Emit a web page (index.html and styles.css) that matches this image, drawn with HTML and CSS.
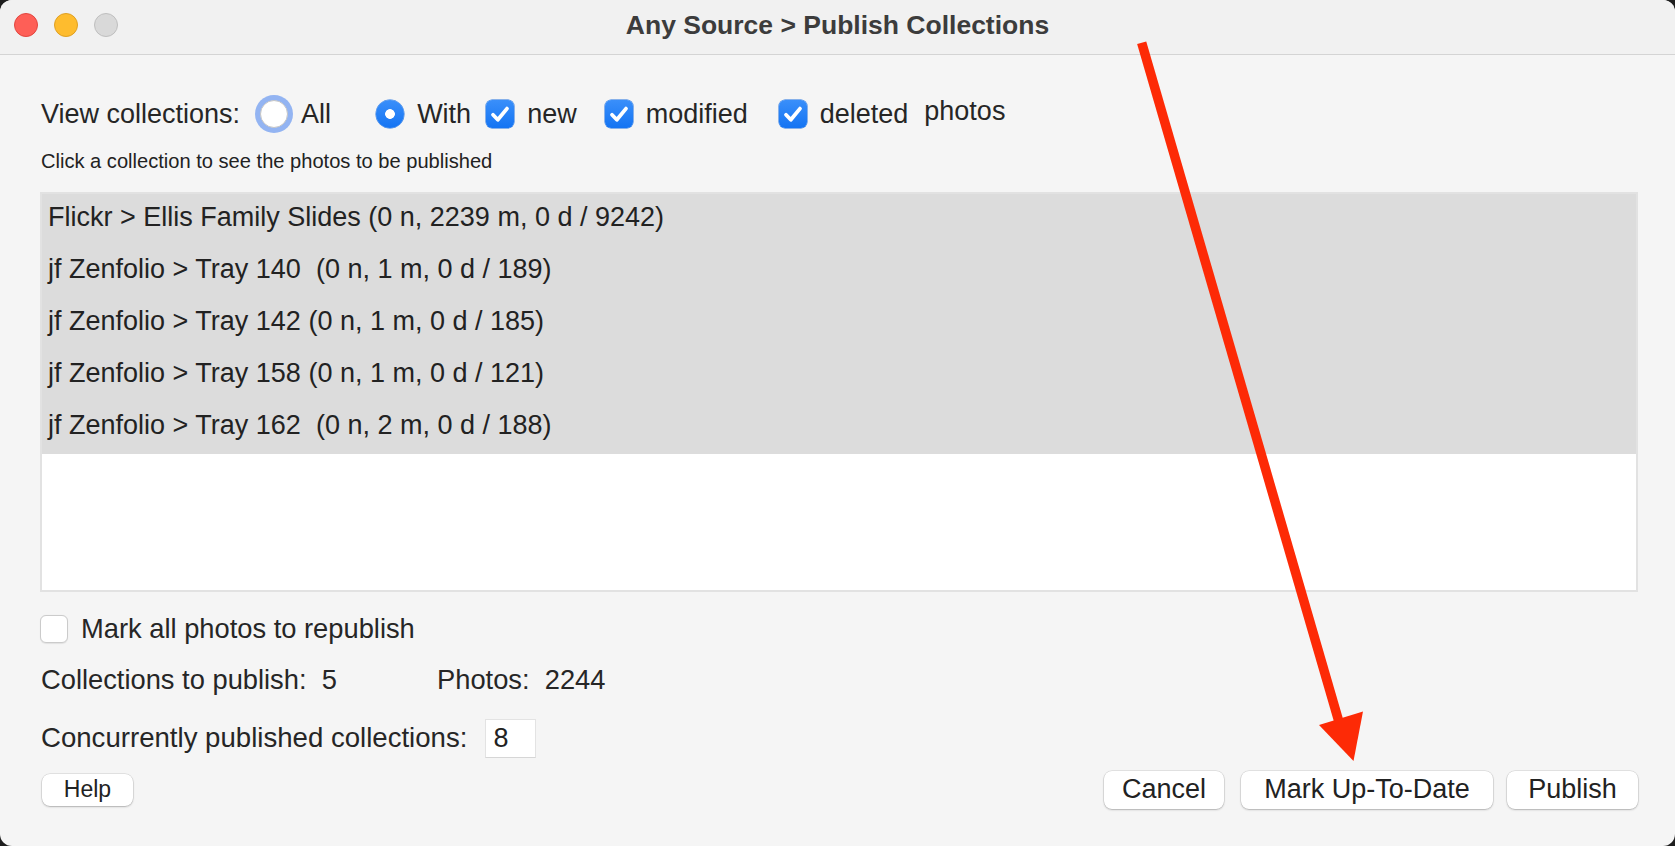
FILE: index.html
```html
<!DOCTYPE html>
<html>
<head>
<meta charset="utf-8">
<title>Any Source &gt; Publish Collections</title>
<link rel="stylesheet" href="styles.css">
</head>
<body>
<div class="window">
  <div class="titlebar">
    <div class="lights">
      <span class="light red"></span>
      <span class="light yellow"></span>
      <span class="light grey"></span>
    </div>
    <div class="title">Any Source &gt; Publish Collections</div>
  </div>
  <div class="content">
    <div class="view-row">
      <span class="view-label">View collections:</span>
      <span class="radio radio-off"></span><span class="opt opt-all">All</span>
      <span class="radio radio-on"></span><span class="opt opt-with">With</span>
      <span class="check check-on"><svg viewBox="0 0 28 28" width="28" height="28"><path d="M7 14.8 L11.8 19.8 L21 8.6" fill="none" stroke="#fff" stroke-width="3.8" stroke-linecap="round" stroke-linejoin="round"/></svg></span><span class="opt opt-new">new</span>
      <span class="check check-on"><svg viewBox="0 0 28 28" width="28" height="28"><path d="M7 14.8 L11.8 19.8 L21 8.6" fill="none" stroke="#fff" stroke-width="3.8" stroke-linecap="round" stroke-linejoin="round"/></svg></span><span class="opt opt-mod">modified</span>
      <span class="check check-on"><svg viewBox="0 0 28 28" width="28" height="28"><path d="M7 14.8 L11.8 19.8 L21 8.6" fill="none" stroke="#fff" stroke-width="3.8" stroke-linecap="round" stroke-linejoin="round"/></svg></span><span class="opt opt-del">deleted</span>
      <span class="photos">photos</span>
    </div>
    <div class="hint">Click a collection to see the photos to be published</div>
    <div class="list">
      <div class="row">Flickr &gt; Ellis Family Slides (0 n, 2239 m, 0 d / 9242)</div>
      <div class="row">jf Zenfolio &gt; Tray 140  (0 n, 1 m, 0 d / 189)</div>
      <div class="row">jf Zenfolio &gt; Tray 142 (0 n, 1 m, 0 d / 185)</div>
      <div class="row">jf Zenfolio &gt; Tray 158 (0 n, 1 m, 0 d / 121)</div>
      <div class="row">jf Zenfolio &gt; Tray 162  (0 n, 2 m, 0 d / 188)</div>
    </div>
    <div class="mark-row">
      <span class="check check-off"></span>
      <span class="mark-label">Mark all photos to republish</span>
    </div>
    <div class="stats">
      <span class="stat-coll">Collections to publish:  5</span>
      <span class="stat-photos">Photos:  2244</span>
    </div>
    <div class="conc-row">
      <span class="conc-label">Concurrently published collections:</span>
      <span class="num-field">8</span>
    </div>
    <div class="buttons">
      <button class="btn btn-help">Help</button>
      <div class="spacer"></div>
      <button class="btn btn-main btn-cancel">Cancel</button>
      <button class="btn btn-main btn-mark">Mark Up-To-Date</button>
      <button class="btn btn-main btn-publish">Publish</button>
    </div>
  </div>
  <svg class="arrow" viewBox="0 0 1675 846" width="1675" height="846">
    <line x1="1141.7" y1="42.7" x2="1339" y2="722" stroke="#fd2a06" stroke-width="9.5" stroke-linecap="butt"/>
    <polygon points="1319,725 1363,711.5 1353.5,761" fill="#fd2a06"/>
  </svg>
</div>
</body>
</html>
```

FILE: styles.css
```css
* { box-sizing: border-box; }

html, body {
  margin: 0;
  padding: 0;
}

body {
  width: 1675px;
  height: 846px;
  background: #1e1e1e;
  font-family: "Liberation Sans", Arial, sans-serif;
  color: #262626;
  overflow: hidden;
}

.window {
  position: relative;
  width: 1675px;
  height: 846px;
  background: #f5f5f5;
  border-radius: 12px;
  overflow: hidden;
  display: flex;
  flex-direction: column;
}

.arrow {
  position: absolute;
  left: 0;
  top: 0;
  pointer-events: none;
}

.titlebar {
  position: relative;
  height: 55px;
  flex: none;
  background: #f1f1f1;
  border-bottom: 1px solid #d4d4d4;
  display: flex;
  align-items: center;
  justify-content: center;
}

.lights {
  position: absolute;
  left: 14px;
  top: 13px;
  display: flex;
  gap: 16px;
}

.light {
  width: 24px;
  height: 24px;
  border-radius: 50%;
  display: block;
}
.light.red { background: #fe5f57; border: 1px solid #e2463f; }
.light.yellow { background: #febc2e; border: 1px solid #dfa023; }
.light.grey { background: #d9d9d9; border: 1px solid #bfbfbf; }

.title {
  font-weight: bold;
  font-size: 26.5px;
  color: #3c3c3c;
  margin-top: -3px;
}

.content {
  flex: 1;
  padding: 40px 37px 0 40px;
  display: flex;
  flex-direction: column;
}

/* first row */
.view-row {
  height: 38px;
  display: flex;
  align-items: center;
  font-size: 27px;
}

.view-label { margin-left: 1px; }

.radio {
  width: 28px;
  height: 28px;
  border-radius: 50%;
  flex: none;
}
.radio-off {
  margin-left: 20px;
  background: #fff;
  border: 1px solid #c6c6c6;
  box-shadow: 0 0 0 5px #93b4f2;
}
.radio-on {
  background: radial-gradient(circle, #fff 0 4.5px, transparent 5.2px), linear-gradient(#3a8ffa, #1474f3);
  box-shadow: 0 0 0 0.5px #1a6fe0;
}

.opt { margin-left: 13px; }
.opt-all { margin-right: 45px; }
.opt-with { margin-right: 15px; }
.opt-new { margin-right: 28px; }
.opt-mod { margin-right: 31px; }

.check {
  width: 28px;
  height: 28px;
  border-radius: 6px;
  flex: none;
  display: block;
}
.check svg { display: block; }
.check-on {
  background: linear-gradient(#3a8ffa, #1474f3);
  box-shadow: 0 0 0 0.5px #1a6fe0;
}
.check-off {
  background: #fff;
  border: 1px solid #cbcbcb;
  box-shadow: 0 0.5px 1px rgba(0,0,0,0.08);
}

.photos {
  margin-left: 16px;
  margin-bottom: 5px;
}

/* hint */
.hint {
  margin-top: 16px;
  font-size: 20.1px;
  line-height: 24px;
  color: #222;
  margin-left: 1px;
}

/* list */
.list {
  margin-top: 19px;
  height: 400px;
  background: #fff;
  border: 2px solid #e2e2e2;
  flex: none;
}

.row {
  height: 52px;
  background: #dcdcdc;
  font-size: 27px;
  line-height: 47px;
  padding-left: 6px;
  white-space: pre;
  color: #222;
}

/* mark all */
.mark-row {
  margin-top: 23px;
  height: 28px;
  display: flex;
  align-items: center;
  font-size: 27px;
}
.mark-label { margin-left: 13px; font-size: 27.3px; }

/* stats */
.stats {
  margin-top: 21px;
  height: 32px;
  display: flex;
  align-items: center;
  font-size: 27.3px;
  white-space: pre;
}
.stat-coll {
  width: 396px;
  flex: none;
  margin-left: 1px;
}

/* concurrency */
.conc-row {
  margin-top: 22px;
  height: 40px;
  display: flex;
  align-items: center;
  font-size: 27.6px;
}
.conc-label { margin-left: 1px; }
.num-field {
  margin-left: 18px;
  width: 51px;
  height: 39px;
  background: #fff;
  border: 1px solid #e3e3e3;
  border-bottom-color: #d6d6d6;
  padding-left: 7px;
  line-height: 37px;
  font-size: 27px;
  color: #222;
}

/* buttons */
.buttons {
  margin-top: 12px;
  height: 39px;
  display: flex;
  align-items: center;
}
.spacer { flex: 1; }

.btn {
  font-family: "Liberation Sans", Arial, sans-serif;
  color: #222;
  background: #fff;
  border: none;
  border-radius: 8px;
  box-shadow: 0 0 0 0.5px rgba(0,0,0,0.14), 0 1px 2px rgba(0,0,0,0.22);
  padding: 0;
  margin: 0;
  text-align: center;
}

.btn-help {
  margin-left: 2px;
  width: 91px;
  height: 32px;
  font-size: 23px;
}

.btn-main {
  height: 38px;
  font-size: 27px;
}
.btn-cancel { width: 120px; }
.btn-mark { width: 252px; margin-left: 17px; }
.btn-publish { width: 131px; margin-left: 14px; }
```
